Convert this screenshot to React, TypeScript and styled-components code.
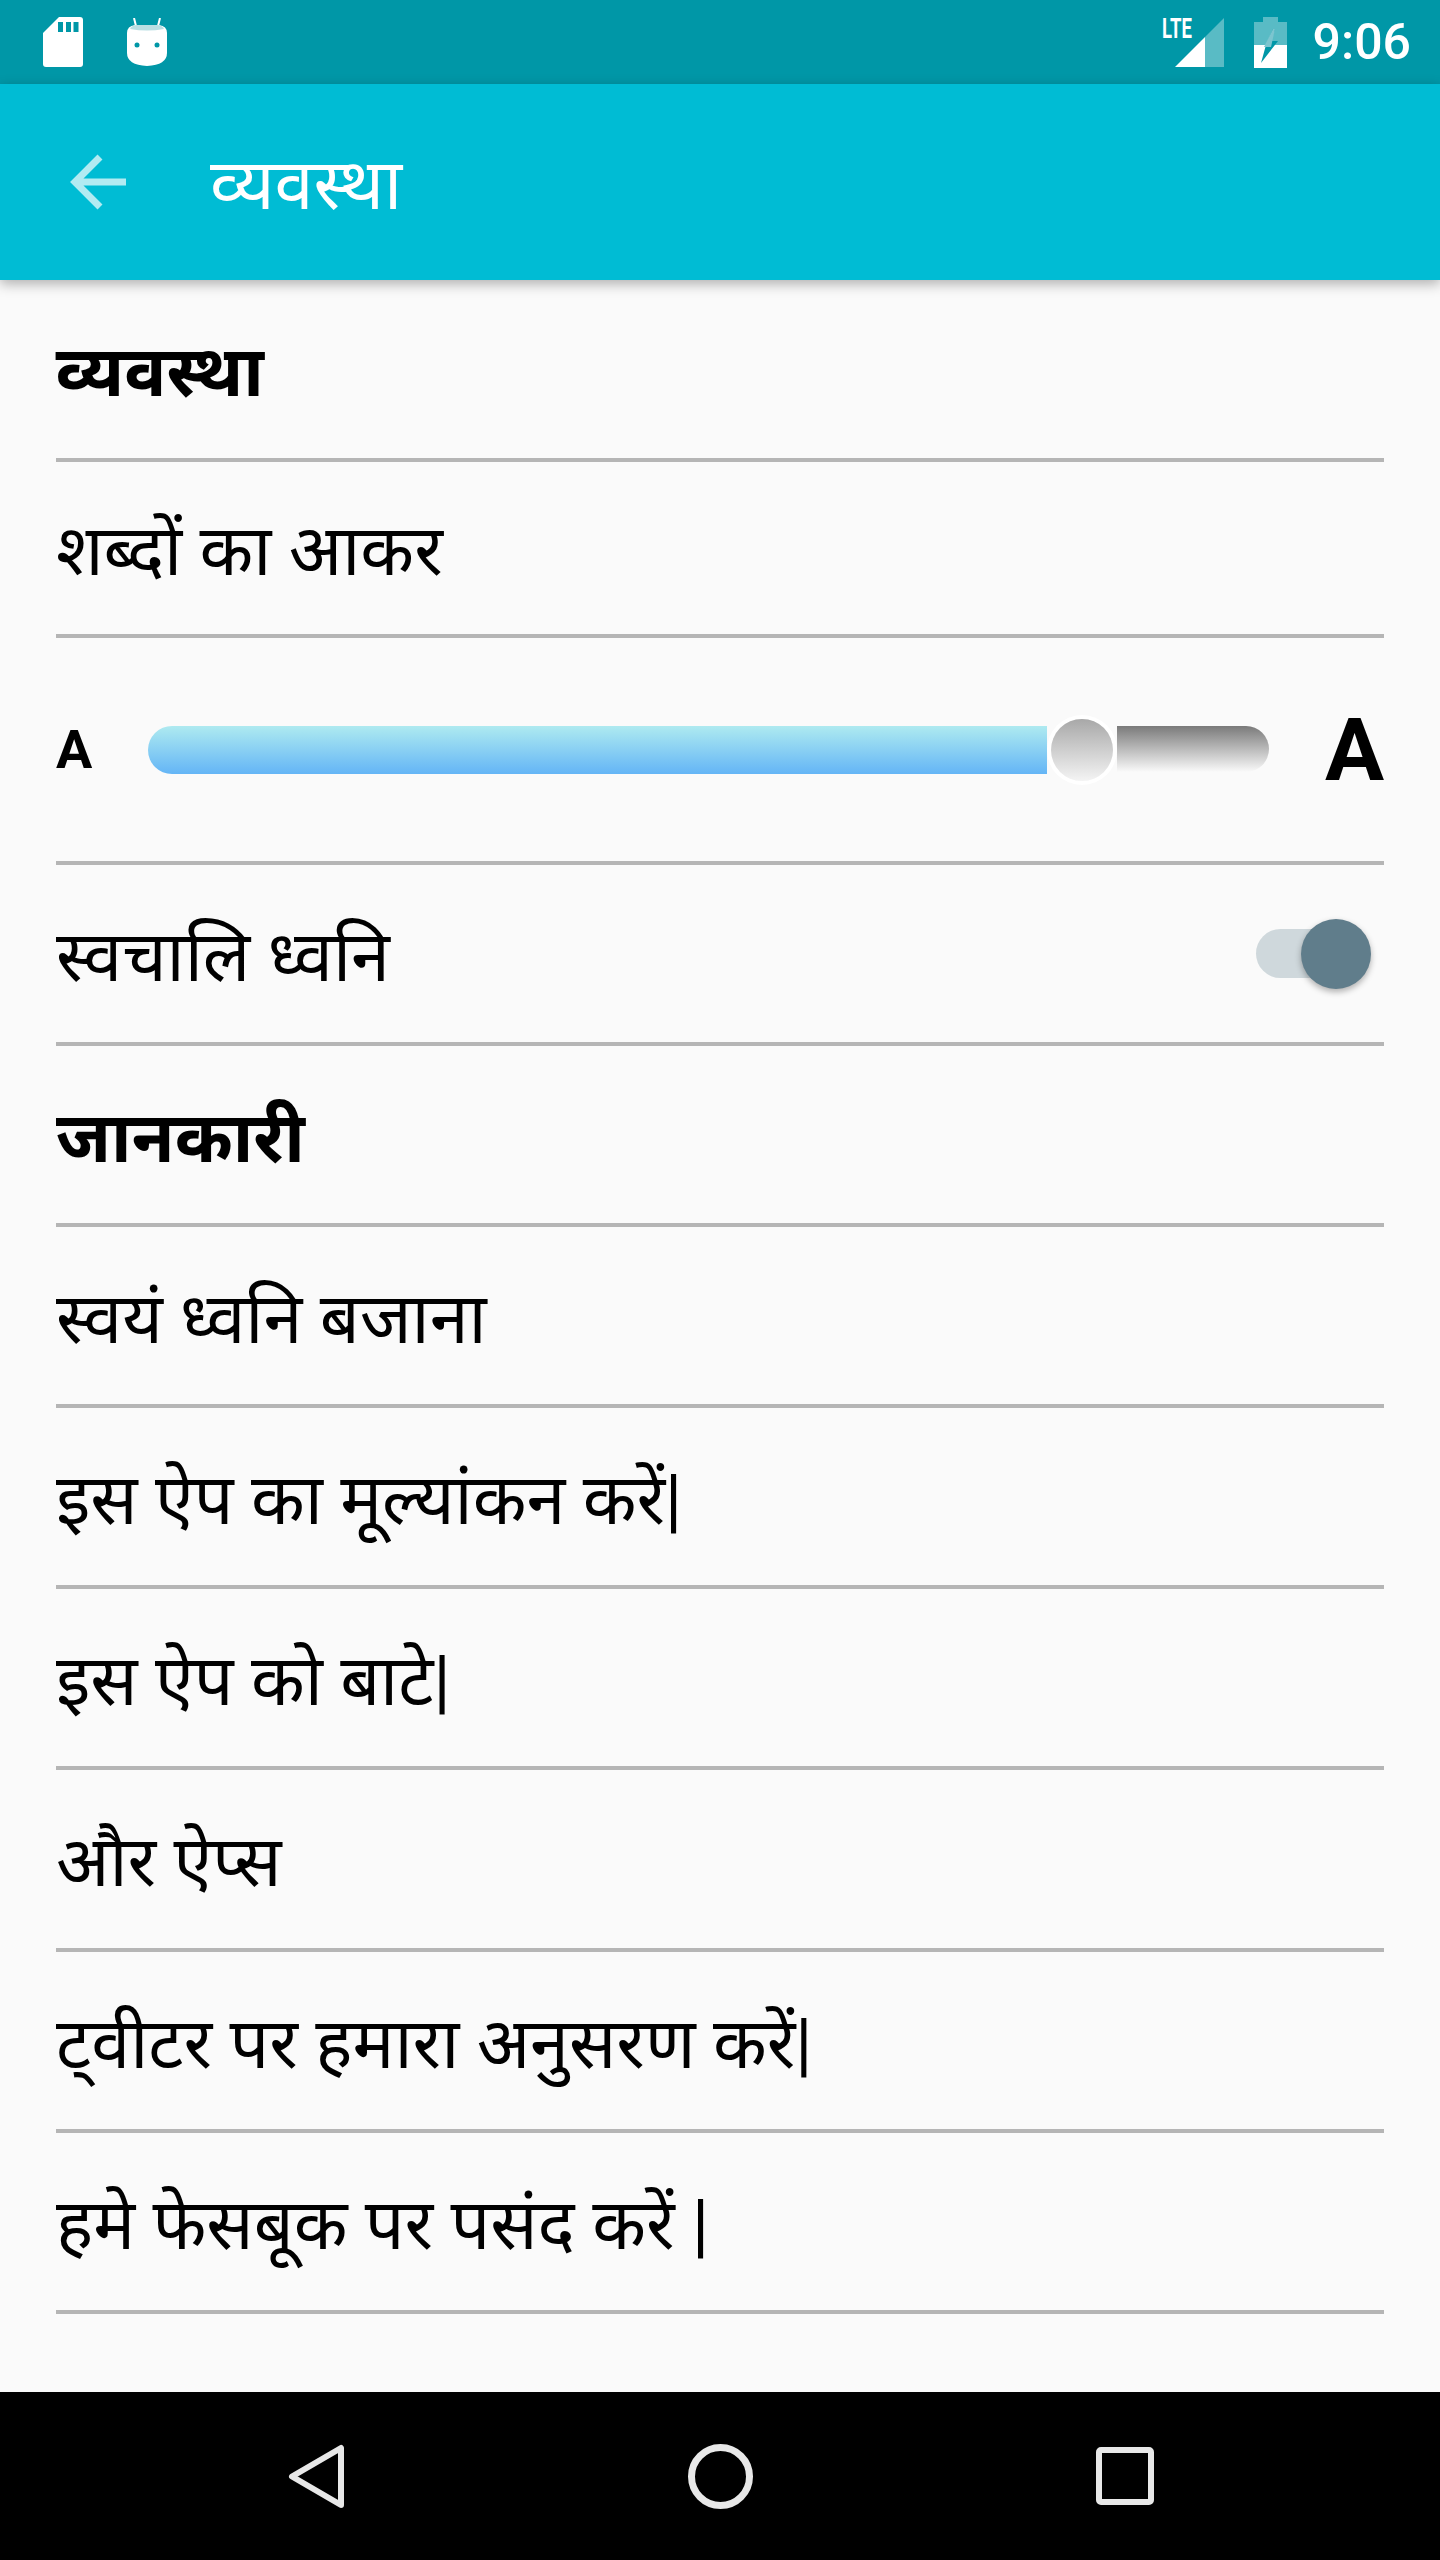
import React from 'react';
import styled, { createGlobalStyle } from 'styled-components';

const GlobalStyle = createGlobalStyle`
  html, body {
    margin: 0;
    padding: 0;
    background: #fafafa;
  }
  body {
    font-family: Roboto, "Noto Sans", sans-serif;
  }
`;

const Screen = styled.div`
  width: 1440px;
  height: 2560px;
  display: flex;
  flex-direction: column;
  background: #fafafa;
  overflow: hidden;
`;

const StatusBar = styled.div`
  height: 84px;
  flex: none;
  display: flex;
  align-items: center;
  padding: 0 29px 0 43px;
  background: #0097a7;
`;

const StatusLeft = styled.div`
  display: flex;
  align-items: center;
  gap: 44px;
  flex: 1;
`;

const SignalWrap = styled.div`
  position: relative;
  width: 49px;
  height: 49px;
  margin-right: 30px;
`;

const LteLabel = styled.span`
  position: absolute;
  left: -13px;
  top: -1px;
  font-size: 28px;
  line-height: 24px;
  font-weight: 700;
  color: #fff;
  transform: scaleX(0.66);
  transform-origin: left top;
`;

const Clock = styled.span`
  margin-left: 26px;
  font-size: 50px;
  font-weight: 500;
  color: #fff;
`;

const AppBar = styled.header`
  height: 196px;
  flex: none;
  display: flex;
  align-items: center;
  gap: 84px;
  padding-left: 70px;
  background: #00bcd4;
  box-shadow: 0 4px 12px rgba(0, 0, 0, 0.3);
  position: relative;
`;

const AppTitle = styled.h1`
  margin: 0;
  font-size: 70px;
  font-weight: 400;
  color: #fff;
`;

const List = styled.main`
  flex: 1;
  padding: 0 56px;
`;

const Row = styled.div<{ $height: number }>`
  height: ${({ $height }) => $height}px;
  box-sizing: border-box;
  display: flex;
  align-items: center;
  justify-content: space-between;
  border-bottom: 4px solid #b5b5b5;
`;

const RowText = styled.span<{ $bold?: boolean }>`
  font-size: 70px;
  font-weight: ${({ $bold }) => ($bold ? 700 : 400)};
  color: #000;
  white-space: nowrap;
`;

const SizeRow = styled(Row)`
  justify-content: flex-start;
`;

const SmallA = styled.span`
  width: 92px;
  flex: none;
  font-size: 54px;
  font-weight: 700;
  color: #000;
`;

const BigA = styled.span`
  margin-left: auto;
  font-size: 88px;
  font-weight: 700;
  color: #000;
`;

const SliderFill = styled.div`
  width: 899px;
  height: 48px;
  border-radius: 24px 0 0 24px;
  background: linear-gradient(#aeeaf0, #64b5f6);
`;

const SliderThumb = styled.div`
  width: 62px;
  height: 62px;
  flex: none;
  margin: 0 4px;
  border-radius: 50%;
  background: linear-gradient(#a8a8a8, #f4f4f4);
  box-shadow: 0 0 0 4px #fff;
`;

const SliderRest = styled.div`
  width: 152px;
  height: 46px;
  margin-top: -2px;
  border-radius: 0 24px 24px 0;
  background: linear-gradient(#7a7a7a, #fafafa);
`;

const Toggle = styled.div`
  position: relative;
  width: 84px;
  height: 49px;
  margin-right: 44px;
  border-radius: 25px;
  background: #cfd8dc;
`;

const ToggleKnob = styled.div`
  position: absolute;
  left: 45px;
  top: -10px;
  width: 70px;
  height: 70px;
  border-radius: 50%;
  background: #607d8b;
  box-shadow: 0 3px 6px rgba(0, 0, 0, 0.3);
`;

const NavBar = styled.nav`
  height: 168px;
  flex: none;
  display: flex;
  align-items: center;
  gap: 343px;
  padding-left: 288px;
  background: #000;
`;

const items = [
  { text: 'जानकारी', bold: true, height: 181 },
  { text: 'स्वयं ध्वनि बजाना', height: 181 },
  { text: 'इस ऐप का मूल्यांकन करें|', height: 181 },
  { text: 'इस ऐप को बाटे|', height: 181 },
  { text: 'और ऐप्स', height: 182 },
  { text: 'ट्वीटर पर हमारा अनुसरण करें|', height: 181 },
  { text: 'हमे फेसबूक पर पसंद करें |', height: 181 },
];

const App = () => {
  return (
    <Screen>
      <GlobalStyle />
      <StatusBar>
        <StatusLeft>
          <svg width="40" height="50" viewBox="0 0 40 50">
            <path d="M16 0H37a3 3 0 0 1 3 3V47a3 3 0 0 1-3 3H3a3 3 0 0 1-3-3V16Z" fill="#fff" />
            <path d="M15 5h5v10h-5ZM23 5h5v10h-5ZM30.500 5h5v10h-5Z" fill="#0097a7" />
          </svg>
          <svg width="40" height="48" viewBox="0 0 40 48">
            <path d="M9 8L7 0M31 8L33 0" stroke="#fff" strokeWidth="2" />
            <path d="M8 7h24q8 1 8 8v20q0 12-20 13q-20-1-20-13v-20q0-7 8-8Z" fill="#fff" />
            <path d="M3 11q2-4 7-4h20q5 0 7 4q-17 3-34 0Z" fill="#b9dfe3" />
            <circle cx="10" cy="27" r="2.500" fill="#0097a7" />
            <circle cx="30" cy="27" r="2.500" fill="#0097a7" />
          </svg>
        </StatusLeft>
        <SignalWrap>
          <svg width="49" height="49" viewBox="0 0 49 49">
            <path d="M49 0V49H30V19Z" fill="#fff" fillOpacity="0.35" />
            <path d="M30 19V49H0Z" fill="#fff" />
          </svg>
          <LteLabel>LTE</LteLabel>
        </SignalWrap>
        <svg width="33" height="51" viewBox="0 0 33 51">
          <path d="M9 0h15v5h9v46H0V5h9Z" fill="#fff" fillOpacity="0.35" />
          <path d="M0 28h33v23H0Z" fill="#fff" />
          <path d="M12 28L7 46L24 24h-7l4-12h-2Z" fill="#0097a7" />
          <path d="M19 12L10 30h7l4-18Z" fill="#7cc5cf" />
        </svg>
        <Clock>9:06</Clock>
      </StatusBar>
      <AppBar>
        <svg width="56" height="56" viewBox="0 0 56 56">
          <path d="M30 3L5 28L30 53M5 28H56" fill="none" stroke="#b2ebf2" strokeWidth="7" />
        </svg>
        <AppTitle>व्यवस्था</AppTitle>
      </AppBar>
      <List>
        <Row $height={182}>
          <RowText $bold>व्यवस्था</RowText>
        </Row>
        <Row $height={176}>
          <RowText>शब्दों का आकर</RowText>
        </Row>
        <SizeRow $height={227}>
          <SmallA>A</SmallA>
          <SliderFill />
          <SliderThumb />
          <SliderRest />
          <BigA>A</BigA>
        </SizeRow>
        <Row $height={181}>
          <RowText>स्वचालि ध्वनि</RowText>
          <Toggle>
            <ToggleKnob />
          </Toggle>
        </Row>
        {items.map((item, index) => (
          <Row key={index} $height={item.height}>
            <RowText $bold={item.bold}>{item.text}</RowText>
          </Row>
        ))}
      </List>
      <NavBar>
        <svg width="57" height="65" viewBox="0 0 57 65">
          <path d="M53 4V61L4 32.500Z" fill="none" stroke="#e8e8e8" strokeWidth="6" strokeLinejoin="round" />
        </svg>
        <svg width="65" height="65" viewBox="0 0 65 65">
          <circle cx="32.500" cy="32.500" r="29" fill="none" stroke="#e8e8e8" strokeWidth="7" />
        </svg>
        <svg width="58" height="58" viewBox="0 0 58 58">
          <rect x="3" y="3" width="52" height="52" rx="2" fill="none" stroke="#e8e8e8" strokeWidth="6" />
        </svg>
      </NavBar>
    </Screen>
  );
};

export default App;
